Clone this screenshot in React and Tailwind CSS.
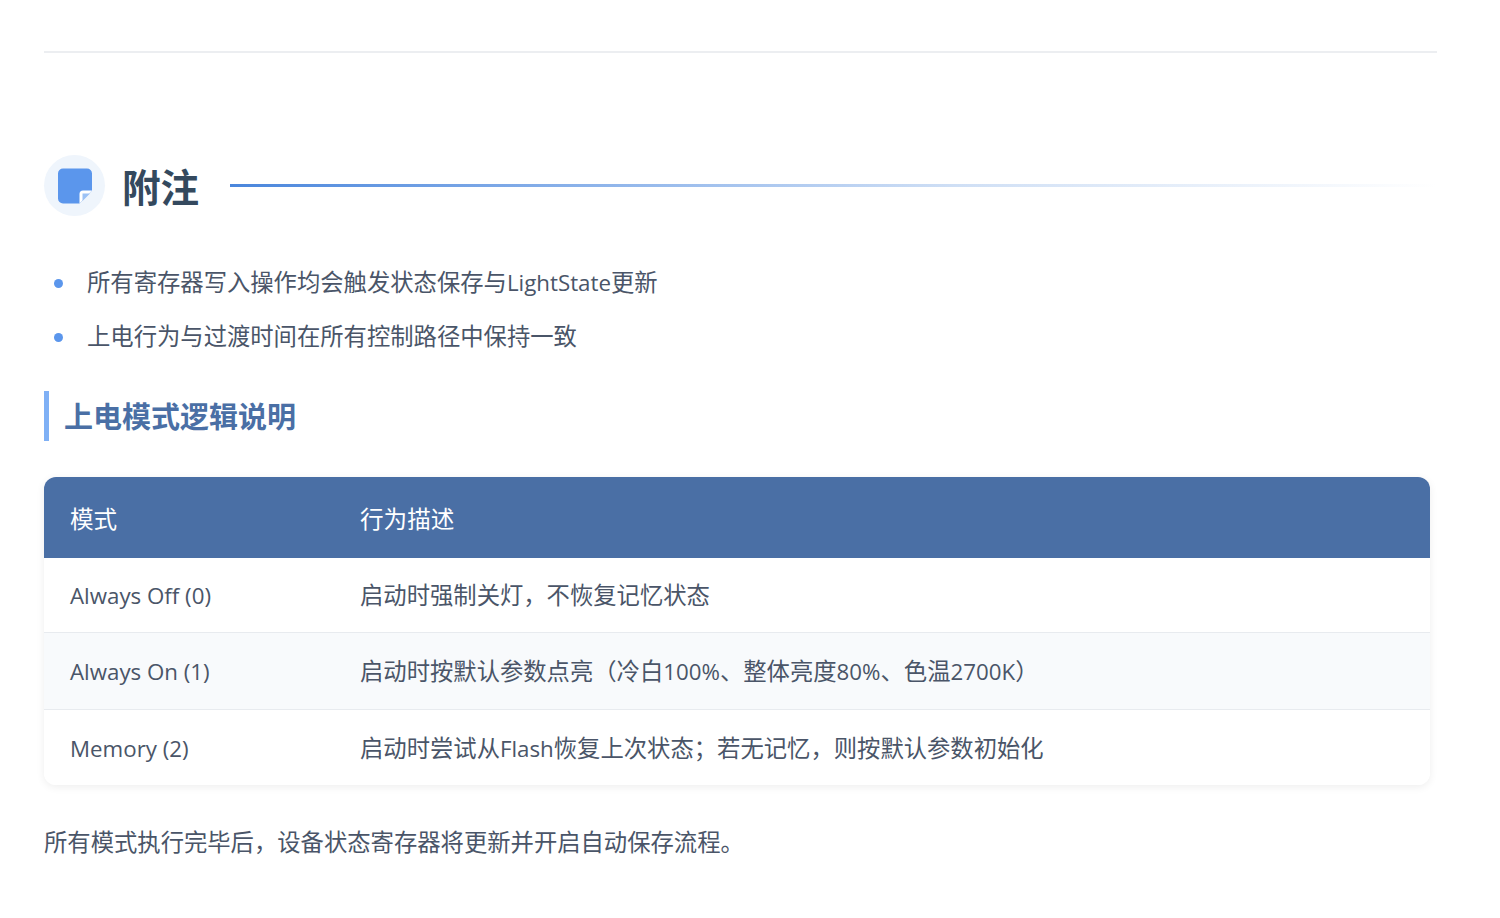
const FONT = "font-['Open_Sans','Noto_Sans_CJK_SC',sans-serif]";

function NoteIcon() {
  return (
    <svg width="36" height="36" viewBox="0 0 36 36" aria-hidden="true">
      <path d="M6 .5H30a5 5 0 0 1 5 5V22.5L22.5 35.5H6a5 5 0 0 1-5-5V5.500a5 5 0 0 1 5-5z" fill="#5b96ec" />
      <path d="M35 22.500H26a3.500 3.500 0 0 0-3.500 3.500V35.500z" fill="#ffffff" />
      <path d="M25.500 25.500H33L25.500 33z" fill="#9cc2f5" />
    </svg>
  );
}

// Latin runs are set slightly smaller, as their face is narrower in the picture
function Mixed({ text }) {
  return text.split(/([\x00-\x7f]+)/).filter(Boolean).map((part, i) =>
    /^[\x00-\x7f]+$/.test(part) ? (
      <span key={i} className="text-[22.3px]">{part}</span>
    ) : (
      <span key={i}>{part}</span>
    )
  );
}

const rows = [
  { m: "Always Off (0)", d: "启动时强制关灯，不恢复记忆状态", h: "h-[75px]", bg: "bg-white", pad: "pt-0" },
  { m: "Always On (1)", d: "启动时按默认参数点亮（冷白100%、整体亮度80%、色温2700K）", h: "h-[77px]", bg: "bg-[#f8fafc]", pad: "pt-0" },
  { m: "Memory (2)", d: "启动时尝试从Flash恢复上次状态；若无记忆，则按默认参数初始化", h: "h-[75px]", bg: "bg-white", pad: "pt-[2px]" },
];

export default function App() {
  return (
    <div className={`${FONT} w-[1500px] h-[918px] overflow-hidden bg-white pl-[44px] text-[23.33px] text-[#4a5568]`}>
      <div className="mt-[51px] w-[1393px] h-[2px] bg-[#eceef1]" />

      <div className="mt-[102px] flex items-center w-[1393px] h-[61px]">
        <div className="w-[61px] h-[61px] rounded-full bg-[#eff5fc] flex items-center justify-center shrink-0">
          <NoteIcon />
        </div>
        <h2 className="ml-[17px] pt-[4px] text-[38.5px] font-bold leading-none text-[#34495e]">附注</h2>
        <div className="ml-[31px] flex-1 h-[3px] bg-gradient-to-r from-[#4a86dc] via-[#cfdff5] via-60% to-transparent" />
      </div>

      <ul className="mt-[40px]">
        {["所有寄存器写入操作均会触发状态保存与LightState更新", "上电行为与过渡时间在所有控制路径中保持一致"].map((t, i) => (
          <li key={i} className="flex items-center h-[54px]">
            <span className="ml-[10px] w-[9px] h-[9px] rounded-full bg-[#5b96ec] shrink-0" />
            <span className="ml-[24px] -mt-[2px] whitespace-nowrap"><Mixed text={t} /></span>
          </li>
        ))}
      </ul>

      <h3 className="mt-[27px] h-[50px] flex items-center border-l-[5px] border-[#7fb0f5] pl-[15px] pt-[2px] text-[29px] font-bold text-[#4a6fa5]">
        上电模式逻辑说明
      </h3>

      <div className="mt-[36px] w-[1386px] rounded-xl overflow-hidden shadow-[0_2px_8px_rgba(0,0,0,0.07)]">
        <div className="flex items-center h-[81px] pt-[4px] bg-[#4a6fa5] text-white text-[23.6px]">
          <div className="w-[316px] pl-[26px]">模式</div>
          <div>行为描述</div>
        </div>
        {rows.map((r, i) => (
          <div key={i} className={`flex items-center ${r.pad} ${r.h} ${r.bg} ${i < 2 ? "border-b border-[#e8ebef]" : ""}`}>
            <div className="w-[316px] pl-[26px]"><Mixed text={r.m} /></div>
            <div className="whitespace-nowrap"><Mixed text={r.d} /></div>
          </div>
        ))}
      </div>

      <p className="mt-[40px] whitespace-nowrap">所有模式执行完毕后，设备状态寄存器将更新并开启自动保存流程。</p>
    </div>
  );
}
